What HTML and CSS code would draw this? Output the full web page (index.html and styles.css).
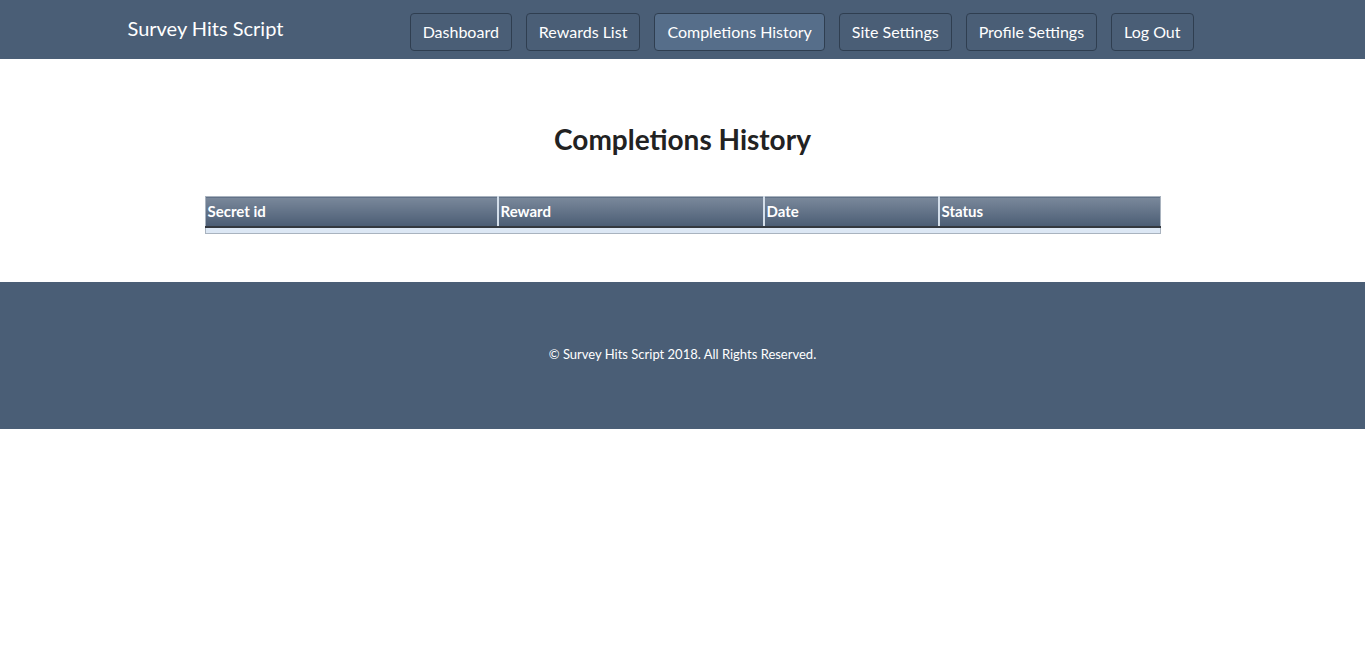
FILE: index.html
```html
<!DOCTYPE html>
<html lang="en">
<head>
  <meta charset="UTF-8" />
  <meta name="viewport" content="width=device-width, initial-scale=1.0"/>
  <title>Completions History - Survey Hits Script</title>
  <link rel="stylesheet" href="styles.css">
</head>
<body>
  <header class="topbar">
    <div class="topbar-inner">
      <a class="brand" href="#">Survey Hits Script</a>
      <nav class="nav">
        <a class="nav-btn" href="#">Dashboard</a>
        <a class="nav-btn" href="#">Rewards List</a>
        <a class="nav-btn active" href="#">Completions History</a>
        <a class="nav-btn" href="#">Site Settings</a>
        <a class="nav-btn" href="#">Profile Settings</a>
        <a class="nav-btn" href="#">Log Out</a>
      </nav>
    </div>
  </header>

  <main class="content">
    <h1 class="page-title">Completions History</h1>
    <table class="grid">
      <thead>
        <tr>
          <th class="col-id">Secret id</th>
          <th class="col-reward">Reward</th>
          <th class="col-date">Date</th>
          <th class="col-status">Status</th>
        </tr>
      </thead>
      <tbody>
        <tr class="empty-row"><td></td><td></td><td></td><td></td></tr>
      </tbody>
    </table>
  </main>

  <footer class="footer">
    <p>&copy; Survey Hits Script 2018. All Rights Reserved.</p>
  </footer>
</body>
</html>
```

FILE: styles.css
```css
body {
  margin: 0;
  font-family: Lato, "Open Sans", sans-serif;
  background: #fff;
  color: #222;
}
.topbar {
  background: #4a5e76;
  height: 59px;
}
.topbar-inner {
  max-width: 1140px;
  margin: 0 auto;
  padding: 0 59px 0 15px;
  height: 100%;
  display: flex;
  align-items: center;
  justify-content: space-between;
  box-sizing: border-box;
}
.brand {
  color: #fff;
  text-decoration: none;
  font-size: 20px;
  margin-top: -3px;
}
.nav {
  display: flex;
  gap: 14px;
  margin-top: 5px;
}
.nav-btn {
  display: block;
  height: 38px;
  line-height: 36px;
  box-sizing: border-box;
  padding: 0 12px;
  border: 1px solid #2f3e50;
  border-radius: 4px;
  color: #fff;
  text-decoration: none;
  font-size: 16px;
  background: #4a5e76;
}
.nav-btn.active {
  background: #566e8a;
}
.content {
  padding: 62px 0 48px;
}
.page-title {
  text-align: center;
  font-size: 28px;
  font-weight: 700;
  margin: 0 0 39px;
  color: #222;
  line-height: 36px;
}
.grid {
  width: 956px;
  margin: 0 auto;
  border-collapse: collapse;
  table-layout: fixed;
  border: 1px solid #a9b3bf;
}
.grid th {
  height: 28px;
  padding: 0 2px 1px;
  text-align: left;
  color: #fff;
  font-size: 15px;
  font-weight: 700;
  background: linear-gradient(#7a889b, #4b5d74);
  border-left: 2px solid #d3deea;
  border-bottom: 2px solid #33383f;
}
.grid th:first-child {
  border-left: none;
}
.col-id { width: 287px; }
.col-reward { width: 260px; }
.col-date { width: 169px; }
.empty-row td {
  height: 5px;
  padding: 0;
  background: #dce7f4;
  border-bottom: 1px solid #a9b3bf;
}
.footer {
  background: #4a5e76;
  height: 147px;
  display: flex;
  align-items: center;
  justify-content: center;
}
.footer p {
  margin: 0 0 3px;
  color: #fff;
  font-size: 13px;
}
```
